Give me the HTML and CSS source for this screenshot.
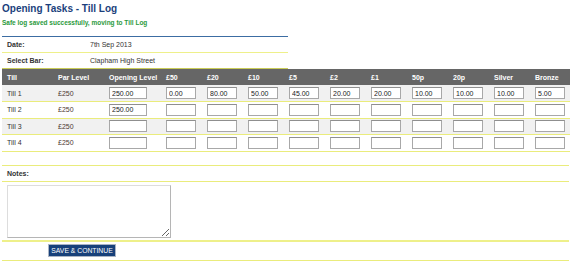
FILE: index.html
```html
<!DOCTYPE html>
<html lang="en">
  <head>
    <meta charset="UTF-8" />
    <title>Opening Tasks - Till Log</title>
    <link rel="stylesheet" href="styles.css">
  </head>
  <body>
    <h1>Opening Tasks - Till Log</h1>
    <p class="success">Safe log saved successfully, moving to Till Log</p>

    <table class="details">
      <tr>
        <th>Date:</th>
        <td>7th Sep 2013</td>
      </tr>
      <tr class="last">
        <th>Select Bar:</th>
        <td>Clapham High Street</td>
      </tr>
    </table>

    <table class="tills">
      <colgroup>
        <col style="width: 51px" />
        <col style="width: 51px" />
        <col style="width: 57px" />
        <col span="9" style="width: 41px" />
        <col style="width: 40px" />
      </colgroup>
      <thead>
        <tr>
          <th>Till</th>
          <th>Par Level</th>
          <th>Opening Level</th>
          <th>£50</th>
          <th>£20</th>
          <th>£10</th>
          <th>£5</th>
          <th>£2</th>
          <th>£1</th>
          <th>50p</th>
          <th>20p</th>
          <th>Silver</th>
          <th>Bronze</th>
        </tr>
      </thead>
      <tbody id="till-rows"></tbody>
    </table>

    <div class="spacer"></div>
    <div class="notes-label">Notes:</div>
    <div class="notes-box">
      <textarea></textarea>
    </div>
    <div class="actions">
      <button class="btn">SAVE &amp; CONTINUE</button>
    </div>

    <script>
      const tills = [
        { name: "Till 1", values: ["250.00", "0.00", "80.00", "50.00", "45.00", "20.00", "20.00", "10.00", "10.00", "10.00", "5.00"] },
        { name: "Till 2", values: ["250.00"] },
        { name: "Till 3", values: [] },
        { name: "Till 4", values: [] },
      ];

      document.getElementById("till-rows").innerHTML = tills
        .map(
          (till) => `
            <tr>
              <td>${till.name}</td>
              <td class="par">£250</td>
              ${Array.from({ length: 11 })
                .map(
                  (_, i) =>
                    `<td><input type="text" class="${i === 0 ? "wide" : ""}" value="${till.values[i] || ""}"></td>`
                )
                .join("")}
            </tr>
          `
        )
        .join("");
    </script>
  </body>
</html>
```

FILE: styles.css
```css
* {
  margin: 0;
  padding: 0;
  box-sizing: border-box;
  font-family: "Liberation Sans", Arial, sans-serif;
}

body {
  padding: 0 6px 0 2px;
  font-size: 7px;
  color: #333;
  background: #fff;
}

h1 {
  font-size: 10px;
  color: #1b3f7c;
  line-height: 15px;
  padding-top: 1px;
}

.success {
  color: #2b9a3b;
  font-weight: bold;
  font-size: 6.5px;
  line-height: 9px;
  margin-top: 2px;
  height: 18px;
}

.details {
  width: 286px;
  border-collapse: collapse;
  border-top: 1px solid #3c6da3;
}

.details th,
.details td {
  text-align: left;
  height: 16px;
  padding: 0 5px;
  border-bottom: 1px solid #eef08a;
}

.details th {
  width: 83px;
  font-weight: bold;
}

.details .last th,
.details .last td {
  border-bottom: 1px solid #c9cc58;
}

.tills {
  width: 567px;
  border-collapse: collapse;
  table-layout: fixed;
}

.tills th {
  background: #666;
  color: #fff;
  text-align: left;
  font-weight: bold;
  height: 16px;
  padding: 0 5px;
  white-space: nowrap;
}

.tills td {
  height: 16.5px;
  padding: 0 5px;
  border-bottom: 1px solid #eaec7c;
}

.tills tbody tr:nth-child(odd) td {
  background: #f1f1f1;
}

.tills .par {
  color: #4f3a32;
}

.tills input {
  display: block;
  width: 30px;
  height: 12px;
  border: 1px solid #a8a8a8;
  border-top-color: #8f8f8f;
  background: #fff;
  font-size: 7px;
  padding: 0 2px;
  color: #222;
}

.tills input.wide {
  width: 38px;
}

.spacer {
  height: 14px;
  border-bottom: 1px solid #eaec7c;
}

.notes-label {
  height: 16px;
  line-height: 15px;
  padding-left: 5px;
  font-weight: bold;
  border-bottom: 1px solid #eaec7c;
}

.notes-box {
  padding: 3px 5px 2px;
  border-bottom: 2px solid #eef08a;
}

.notes-box textarea {
  display: block;
  width: 164px;
  height: 53px;
  border: 1px solid #b5b5b5;
  border-top-color: #ddd;
  border-left-color: #ddd;
  resize: both;
}

.actions {
  height: 19px;
  padding: 2px 0 0 46px;
  border-bottom: 1px solid #eaec7c;
}

.btn {
  display: block;
  width: 68px;
  height: 13px;
  background: #17407a;
  color: #fff;
  border: 1px solid #aab4c4;
  font-size: 6.8px;
  line-height: 11px;
  white-space: nowrap;
  cursor: pointer;
}
```
